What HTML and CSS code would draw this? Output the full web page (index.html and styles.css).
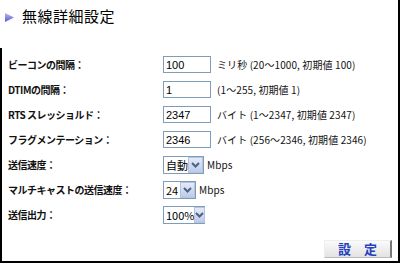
FILE: index.html
```html
<!DOCTYPE html>
<html lang="ja">
<head>
<meta charset="utf-8">
<link rel="stylesheet" href="styles.css">
</head>
<body>
<div class="frame">
  <div class="header">
    <svg class="arrow" width="9" height="9" viewBox="0 0 9 9"><defs><linearGradient id="g" x1="0" y1="0" x2="0" y2="1"><stop offset="0" stop-color="#b8b8f0"/><stop offset="1" stop-color="#5a5ad0"/></linearGradient></defs><polygon points="0,0 9,4.5 0,9" fill="url(#g)"/></svg>
    <h1 class="title">無線詳細設定</h1>
  </div>
  <div class="content">
    <div class="form">
      <div class="label">ビーコンの間隔：</div>
      <div class="field"><input class="txt" value="100"><span class="hint">ミリ秒 (20～1000, 初期値 100)</span></div>
      <div class="label">DTIMの間隔：</div>
      <div class="field"><input class="txt" value="1"><span class="hint">(1～255, 初期値 1)</span></div>
      <div class="label">RTS スレッショルド：</div>
      <div class="field"><input class="txt" value="2347"><span class="hint">バイト (1～2347, 初期値 2347)</span></div>
      <div class="label">フラグメンテーション：</div>
      <div class="field"><input class="txt" value="2346"><span class="hint">バイト (256～2346, 初期値 2346)</span></div>
      <div class="label">送信速度：</div>
      <div class="field"><span class="sel w1"><span class="val">自動</span><span class="btn"><svg width="9" height="6" viewBox="0 0 9 6"><polyline points="1,1 4.5,4.5 8,1" fill="none" stroke="#4d6185" stroke-width="2"/></svg></span></span><span class="hint">Mbps</span></div>
      <div class="label">マルチキャストの送信速度：</div>
      <div class="field"><span class="sel w2"><span class="val">24</span><span class="btn"><svg width="9" height="6" viewBox="0 0 9 6"><polyline points="1,1 4.5,4.5 8,1" fill="none" stroke="#4d6185" stroke-width="2"/></svg></span></span><span class="hint">Mbps</span></div>
      <div class="label">送信出力：</div>
      <div class="field"><span class="sel w3"><span class="val">100%</span><span class="btn"><svg width="9" height="6" viewBox="0 0 9 6"><polyline points="1,1 4.5,4.5 8,1" fill="none" stroke="#4d6185" stroke-width="2"/></svg></span></span></div>
    </div>
    <div class="actions"><button class="submit">設 定</button></div>
  </div>
</div>
</body>
</html>
```
FILE: styles.css
```css
html, body { margin: 0; padding: 0; background: #fff; }
body { font-family: "Noto Sans CJK JP", "Liberation Sans", sans-serif; color: #000; }
.frame {
  width: 398px; height: 261px;
  border-right: 2px solid #000; border-bottom: 2px solid #000;
  display: flex; flex-direction: column;
}
.header { height: 48px; display: flex; align-items: flex-start; padding: 0 0 0 5px; box-sizing: border-box; }
.arrow { margin-top: 13px; }
.title { margin: 3px 0 0 8px; font-size: 15px; font-weight: normal; line-height: 26px; letter-spacing: 0.5px; }
.content { flex: 1; border-left: 2px solid #000; display: flex; flex-direction: column; }
.form {
  display: grid; grid-template-columns: 155px auto; grid-auto-rows: 25px;
  padding: 4px 0 0 6px; align-items: center;
}
.label { font-size: 10px; font-weight: bold; line-height: 12px; letter-spacing: -0.5px; color: #111; }
.field { display: flex; align-items: center; gap: 6px; }
.txt {
  width: 48px; height: 17px; box-sizing: border-box; margin: 0; padding: 0 2px;
  border: 1px solid #7f9db9; font: 11px "Liberation Sans", sans-serif; color: #000;
}
.hint { font-size: 10px; line-height: 12px; letter-spacing: 0.1px; color: #111; }
.sel {
  display: inline-flex; align-items: stretch; height: 18px; box-sizing: border-box;
  border: 1px solid #7f9db9; background: #fff;
}
.sel .val { flex: 1; font-size: 11px; line-height: 16px; padding-left: 2px; }
.sel .btn {
  width: 15px; background: linear-gradient(#e4ebf8, #bccbe8); border: 1px solid #b4c3e0;
  display: flex; align-items: center; justify-content: center; box-sizing: border-box;
}
.w1 { width: 41px; margin-right: -3px; }
.w2 { width: 33px; margin-right: -3px; }
.w3 { width: 42px; }
.actions { flex: 1; display: flex; justify-content: flex-end; align-items: flex-end; padding: 0 6px 3px 0; }
.submit {
  width: 68px; height: 18px; margin: 0; padding: 0 0 0 5px;
  background: linear-gradient(#fbfbfb, #e3e3e3);
  border: none; border-right: 2px solid #777; border-bottom: 1px solid #bbb; border-top: 1px solid #eee; border-left: 1px solid #eee;
  color: #2340c0; font: bold 13px "Noto Sans CJK JP", sans-serif; line-height: 16px; letter-spacing: 5px;
}
```
